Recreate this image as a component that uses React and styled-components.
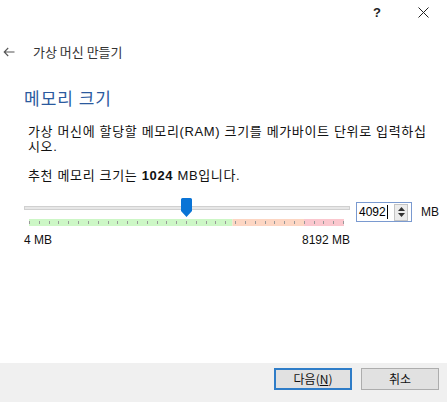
import React from "react";
import styled, { createGlobalStyle } from "styled-components";

const GlobalStyle = createGlobalStyle`
  html, body {
    margin: 0;
    padding: 0;
    background: #ffffff;
  }
  body {
    font-family: "Liberation Sans", "Noto Sans CJK KR", sans-serif;
    color: #000;
  }
`;

const MIN = 4;
const MAX = 8192;
const VALUE = 4092;

const Window = styled.div`
  width: 447px;
  height: 402px;
  display: flex;
  flex-direction: column;
  background: #fff;
  overflow: hidden;
`;

const TitleBar = styled.div`
  height: 24px;
  display: flex;
  justify-content: flex-end;
  padding-right: 1px;
`;

const CaptionButton = styled.div`
  width: 46px;
  height: 24px;
  display: flex;
  align-items: center;
  justify-content: center;
  font-size: 13px;
  font-weight: bold;
  color: #222;
`;

const NavRow = styled.div`
  margin-top: 18px;
  height: 20px;
  display: flex;
  align-items: center;
  padding-left: 3px;
  gap: 18px;
`;

const NavTitle = styled.span`
  font-family: "Noto Sans CJK KR", sans-serif;
  font-size: 13px;
  line-height: 20px;
  color: #333;
`;

const Content = styled.div`
  padding-left: 24px;
  display: flex;
  flex-direction: column;
`;

const Heading = styled.h1`
  margin: 24px 0 0;
  font-family: "Noto Sans CJK KR", sans-serif;
  font-weight: normal;
  font-size: 17px;
  line-height: 24px;
  letter-spacing: 1px;
  color: #2b5a9e;
`;

const Text = styled.p`
  margin: ${(p) => p.$top}px 0 0 4px;
  font-family: "Liberation Sans", "Noto Sans CJK KR", sans-serif;
  font-size: 13px;
  line-height: 15px;
  letter-spacing: 0.65px;
  color: #111;
  white-space: nowrap;
`;

const SliderRow = styled.div`
  margin-top: 14px;
  display: flex;
  align-items: flex-start;
`;

const SliderColumn = styled.div`
  width: 326px;
  display: flex;
  flex-direction: column;
`;

const TrackArea = styled.div`
  position: relative;
  height: 22px;
  display: flex;
  align-items: center;
`;

const Track = styled.div`
  width: 100%;
  height: 2px;
  background: #e7e7e7;
  border: 1px solid #d0d0d0;
  box-sizing: content-box;
`;

const Thumb = styled.svg`
  position: absolute;
  top: 1px;
  width: 11px;
  height: 19px;
  margin-left: -5px;
`;

const TickBar = styled.svg`
  display: block;
  margin: 0 6px 0 5px;
  height: 7px;
`;

const Scale = styled.div`
  display: flex;
  justify-content: space-between;
  margin-top: 7px;
  font-size: 12px;
  line-height: 14px;
  color: #111;
`;

const SpinBox = styled.div`
  margin: 5px 0 0 6px;
  width: 56px;
  height: 20px;
  box-sizing: border-box;
  border: 1px solid #7a9ad0;
  display: flex;
  align-items: center;
  background: #fff;
`;

const SpinInput = styled.div`
  flex: 1;
  padding-left: 2px;
  font-size: 12px;
  line-height: 16px;
  color: #000;
  display: flex;
  align-items: center;
`;

const Caret = styled.span`
  display: inline-block;
  width: 1px;
  height: 14px;
  background: #000;
  margin-left: 1px;
`;

const SpinButtons = styled.div`
  width: 12px;
  height: 15px;
  margin-right: 3px;
  border: 1px solid #c4c4c4;
  background: #ececec;
  display: flex;
  flex-direction: column;
  align-items: center;
  justify-content: center;
  gap: 2px;
`;

const Unit = styled.span`
  margin: 8px 0 0 9px;
  font-size: 12px;
  line-height: 14px;
  color: #111;
`;

const Footer = styled.div`
  margin-top: auto;
  height: 39px;
  background: #f0f0f0;
  display: flex;
  justify-content: flex-end;
  align-items: flex-start;
  padding: 5px 8px 0 0;
  box-sizing: border-box;
  gap: 9px;
`;

const Button = styled.button`
  width: 78px;
  height: 22px;
  box-sizing: border-box;
  background: #e1e1e1;
  border: ${(p) => (p.$primary ? "2px solid #2f7dc8" : "1px solid #adadad")};
  font-family: "Noto Sans CJK KR", sans-serif;
  font-size: 12px;
  line-height: 16px;
  color: #111;
  padding: 0;
  u {
    text-decoration: underline;
  }
`;

function Arrow() {
  return (
    <svg width="12" height="10" viewBox="0 0 12 10">
      <path d="M11.5 5H1.2M5.2 1L1.2 5l4 4" fill="none" stroke="#555" strokeWidth="1.1" />
    </svg>
  );
}

function CloseGlyph() {
  return (
    <svg width="11" height="11" viewBox="0 0 11 11">
      <path d="M0.5 0.5l10 10M10.5 0.5l-10 10" stroke="#222" strokeWidth="1" />
    </svg>
  );
}

function Ticks({ width, count }) {
  const step = (width - 1) / count;
  const lines = [];
  for (let i = 0; i <= count; i++) {
    const x = Math.round(i * step) + 0.5;
    lines.push(<line key={i} x1={x} x2={x} y1="2" y2="5" stroke="#9a9a9a" strokeWidth="1" />);
  }
  const green = width * 0.646;
  const orange = width * 0.873;
  return (
    <TickBar width={width} viewBox={`0 0 ${width} 7`}>
      <rect x="0" y="0" width={green} height="7" fill="#cdf7c6" />
      <rect x={green} y="0" width={orange - green} height="7" fill="#fdd6c3" />
      <rect x={orange} y="0" width={width - orange} height="7" fill="#fbc7ce" />
      {lines}
    </TickBar>
  );
}

export default function App() {
  const tickWidth = 315;
  const thumbLeft = 5 + ((VALUE - MIN) / (MAX - MIN)) * (tickWidth - 1);

  return (
    <Window>
      <GlobalStyle />
      <TitleBar>
        <CaptionButton>?</CaptionButton>
        <CaptionButton>
          <CloseGlyph />
        </CaptionButton>
      </TitleBar>
      <NavRow>
        <Arrow />
        <NavTitle>가상 머신 만들기</NavTitle>
      </NavRow>
      <Content>
        <Heading>메모리 크기</Heading>
        <Text $top={14}>
          가상 머신에 할당할 메모리(RAM) 크기를 메가바이트 단위로 입력하십
          <br />
          시오.
        </Text>
        <Text $top={14}>
          추천 메모리 크기는 <b>1024</b> MB입니다.
        </Text>
        <SliderRow>
          <SliderColumn>
            <TrackArea>
              <Track />
              <Thumb viewBox="0 0 11 19" style={{ left: thumbLeft }}>
                <path d="M1.5 0h8a1.5 1.5 0 0 1 1.5 1.5V13l-5.5 6L0 13V1.5A1.5 1.5 0 0 1 1.5 0z" fill="#0a74d6" />
              </Thumb>
            </TrackArea>
            <Ticks width={tickWidth} count={32} />
            <Scale>
              <span>4 MB</span>
              <span>8192 MB</span>
            </Scale>
          </SliderColumn>
          <SpinBox>
            <SpinInput>
              4092
              <Caret />
            </SpinInput>
            <SpinButtons>
              <svg width="7" height="4" viewBox="0 0 7 4">
                <path d="M0 4L3.5 0 7 4z" fill="#333" />
              </svg>
              <svg width="7" height="4" viewBox="0 0 7 4">
                <path d="M0 0h7L3.5 4z" fill="#333" />
              </svg>
            </SpinButtons>
          </SpinBox>
          <Unit>MB</Unit>
        </SliderRow>
      </Content>
      <Footer>
        <Button $primary>
          다음(<u>N</u>)
        </Button>
        <Button>취소</Button>
      </Footer>
    </Window>
  );
}
